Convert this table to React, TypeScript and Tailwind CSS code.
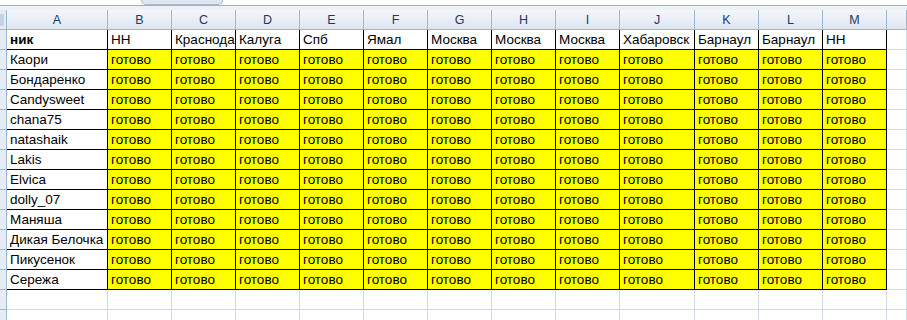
import React from "react";

const columns = ["A", "B", "C", "D", "E", "F", "G", "H", "I", "J", "K", "L", "M", ""];

const cities = [
  "НН",
  "Краснодар",
  "Калуга",
  "Спб",
  "Ямал",
  "Москва",
  "Москва",
  "Москва",
  "Хабаровск",
  "Барнаул",
  "Барнаул",
  "НН",
];

const nicks = [
  "Каори",
  "Бондаренко",
  "Candysweet",
  "chana75",
  "natashaik",
  "Lakis",
  "Elvica",
  "dolly_07",
  "Маняша",
  "Дикая Белочка",
  "Пикусенок",
  "Сережа",
];

// row header + A + B..I + J + K..M + rest of the window
const gridCols = "grid grid-cols-[7px_101px_64px_64px_64px_64px_64px_64px_64px_64px_75px_64px_64px_64px_1fr]";

function RowHead() {
  return <div className="h-5 bg-[#e4ecf7] border-r border-b border-[#9eb6ce]" />;
}

function Cell({
  children,
  filled,
  bold,
}: {
  children?: React.ReactNode;
  filled?: boolean;
  bold?: boolean;
}) {
  return (
    <div
      className={
        "h-5 border-r border-b border-black pl-[3px] overflow-hidden whitespace-nowrap leading-5 text-[13.5px] text-black " +
        (filled ? "bg-[#ffff00] " : "bg-white ") +
        (bold ? "font-bold" : "")
      }
    >
      {children}
    </div>
  );
}

function EmptyCell() {
  return <div className="h-5 bg-white border-r border-b border-[#d0d7e5]" />;
}

export default function App() {
  return (
    <div
      className="w-[907px] h-[320px] overflow-hidden bg-white"
      style={{ fontFamily: '"Liberation Sans", Arial, sans-serif' }}
    >
      {/* strip under the formula bar */}
      <div className="h-[10px] flex flex-col">
        <div className="h-[5px] bg-white pl-[141px]">
          <div className="w-[82px] h-[5px] rounded-b-md bg-[#dfe6ef] border border-t-0 border-[#a9b7c9]" />
        </div>
        <div className="h-px bg-[#a3b1c2]" />
        <div className="flex-1 bg-[#eef2f8]" />
      </div>

      {/* column letters */}
      <div className={gridCols}>
        <div className="h-5 bg-[#e4ecf7] border-r border-b border-[#9eb6ce] flex items-center">
          <div className="w-[4px] h-[12px] bg-[#c5d3e6]" />
        </div>
        {columns.map((c, i) => (
          <div
            key={i}
            className="h-5 bg-gradient-to-b from-[#f4f7fb] to-[#dde6f2] border-r border-b border-[#9eb6ce] text-center leading-5 text-[12.5px] text-[#1f3a5a]"
          >
            {c}
          </div>
        ))}
      </div>

      {/* title row */}
      <div className={gridCols}>
        <RowHead />
        <Cell bold>ник</Cell>
        {cities.map((c, i) => (
          <Cell key={i}>{c}</Cell>
        ))}
        <EmptyCell />
      </div>

      {nicks.map((n) => (
        <div key={n} className={gridCols}>
          <RowHead />
          <Cell>{n}</Cell>
          {cities.map((_, i) => (
            <Cell key={i} filled>
              готово
            </Cell>
          ))}
          <EmptyCell />
        </div>
      ))}

      {[0, 1].map((r) => (
        <div key={r} className={gridCols}>
          <RowHead />
          {columns.map((_, i) => (
            <EmptyCell key={i} />
          ))}
        </div>
      ))}
    </div>
  );
}
